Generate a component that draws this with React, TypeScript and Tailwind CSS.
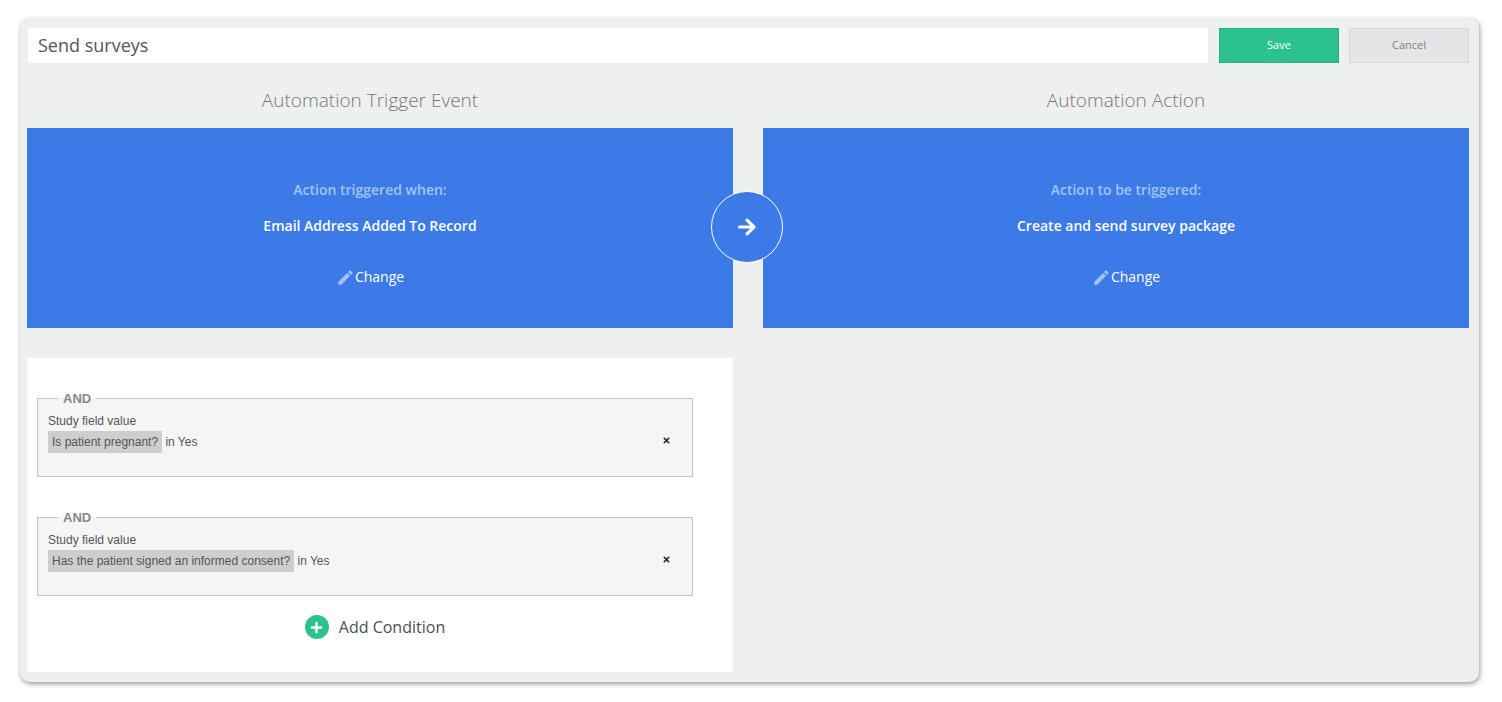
import { FaArrowRight, FaPlus, FaTimes } from "react-icons/fa";
import { MdEdit } from "react-icons/md";

const CONDITIONS = ["Is patient pregnant?", "Has the patient signed an informed consent?"];

function ActionPanel({ label, value, side }: { label: string; value: string; side: "left" | "right" }) {
  return (
    <div className={`h-[200px] bg-[#3c7ae8] flex flex-col items-center text-center ${side === "left" ? "pr-5" : "pl-5"}`}>
      <div className="mt-[52px] text-[14px] leading-[20px] font-semibold text-[#a3c2f5]">{label}</div>
      <div className="mt-4 text-[14px] leading-[20px] font-semibold text-white">{value}</div>
      <button className="mt-[31px] flex items-center text-[14px] leading-[20px] text-white">
        <MdEdit size={19} className="text-[#a3c2f5]" />
        {"Change"}
      </button>
    </div>
  );
}

function Condition({ name }: { name: string }) {
  return (
    <fieldset className="h-[86px] border border-[#c4c4c4] bg-[#f5f5f5] pl-[10px] pr-[20px] relative font-['Liberation_Sans',Arial,sans-serif] text-[12px] text-[#555]">
      <legend className="ml-[10px] px-[5px] text-[13px] leading-[15px] font-bold text-[#888]">AND</legend>
      <div className="mt-[6px] leading-[18px]">Study field value</div>
      <div className="mt-[1px] leading-[22px]">
        <span className="inline-block bg-[#cecece] px-1">{name}</span> in Yes
      </div>
      <FaTimes size={9} className="absolute right-[21px] top-[30px] text-[#333]" />
    </fieldset>
  );
}

export default function App() {
  return (
    <div className="w-[1502px] h-[702px] bg-white pt-[18px] pl-5 font-['Open_Sans',sans-serif]">
      <div className="w-[1459px] h-[664px] bg-[#eef0f0] rounded-[10px] shadow-[1px_2px_5px_rgba(0,0,0,0.4)] pt-[10px] pl-[7px] pr-[10px]">
        {/* Title and buttons */}
        <div className="flex h-[35px]">
          <div className="ml-px w-[1180px] bg-white pl-[10px] text-[18px] leading-[35px] text-[#555]">Send surveys</div>
          <button className="ml-[11px] w-[120px] bg-[#2cc28e] border border-[#27ac7e] text-[11px] text-white">Save</button>
          <button className="ml-[10px] w-[120px] bg-[#e4e5e7] border border-[#d5d7da] text-[11px] text-[#808080]">Cancel</button>
        </div>

        <div className="grid grid-cols-[706px_706px] gap-x-[30px] relative">
          <h2 className="h-[65px] pr-5 pt-[25px] text-center text-[19px] leading-[25px] font-light text-[#777]">Automation Trigger Event</h2>
          <h2 className="h-[65px] pl-5 pt-[25px] text-center text-[19px] leading-[25px] font-light text-[#777]">Automation Action</h2>

          <ActionPanel side="left" label="Action triggered when:" value="Email Address Added To Record" />
          <ActionPanel side="right" label="Action to be triggered:" value="Create and send survey package" />

          {/* Arrow between the panels */}
          <div className="absolute left-[684px] top-[128px] w-[72px] h-[72px] rounded-full bg-[#3c7ae8] border border-white flex items-center justify-center">
            <FaArrowRight size={20} className="text-white" />
          </div>

          <div className="mt-[30px] h-[314px] bg-white pl-[10px] pr-10 pt-[33px]">
            <div className="flex flex-col gap-[33px]">
              {CONDITIONS.map(c => <Condition key={c} name={c} />)}
            </div>
            <button className="mt-[19px] mx-auto flex items-center gap-[10px] text-[16px] leading-[24px] text-[#4a4f57] translate-x-[10px]">
              <span className="w-6 h-6 rounded-full bg-[#2cc28e] flex items-center justify-center">
                <FaPlus size={13} className="text-white" />
              </span>
              Add Condition
            </button>
          </div>
        </div>
      </div>
    </div>
  );
}
